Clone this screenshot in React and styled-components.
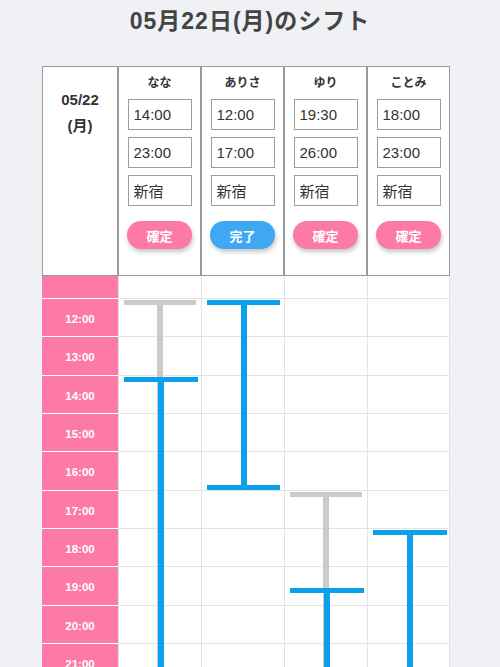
import React from 'react';
import styled, { createGlobalStyle } from 'styled-components';

const HOUR = 115 / 3;
const FIRST_ROW = 23;
const START_HOUR = 12;
const END_HOUR = 27;

const PINK = '#fd7aa8';
const BLUE = '#0ba0e9';
const GRAY = '#cbcbcb';

const staff = [
  { name: 'なな', from: '14:00', to: '23:00', place: '新宿', done: false,
    bars: [{ start: 12, end: 23, color: GRAY, width: 72 }, { start: 14, end: 23, color: BLUE, width: 74 }] },
  { name: 'ありさ', from: '12:00', to: '17:00', place: '新宿', done: true,
    bars: [{ start: 12, end: 17, color: BLUE, width: 73 }] },
  { name: 'ゆり', from: '19:30', to: '26:00', place: '新宿', done: false,
    bars: [{ start: 17, end: 26, color: GRAY, width: 72 }, { start: 19.5, end: 26, color: BLUE, width: 74 }] },
  { name: 'ことみ', from: '18:00', to: '23:00', place: '新宿', done: false,
    bars: [{ start: 18, end: 23, color: BLUE, width: 74 }] },
];

const hours = [];
for (let h = START_HOUR; h < END_HOUR; h++) hours.push(h);

const yOf = (t) => FIRST_ROW - 1 + (t - START_HOUR) * HOUR;

const GlobalStyle = createGlobalStyle`
  html, body {
    margin: 0;
    padding: 0;
  }
  body {
    background: #f0f1f5;
    font-family: "Liberation Sans", "Noto Sans CJK JP", sans-serif;
    color: #333;
  }
`;

const Page = styled.div`
  height: 100vh;
  overflow: hidden;
`;

const Title = styled.h1`
  box-sizing: border-box;
  height: 66px;
  margin: 0;
  padding-top: 5px;
  line-height: 32px;
  text-align: center;
  font-size: 23px;
  font-weight: bold;
  letter-spacing: 1px;
  color: #444;
`;

const Board = styled.div`
  width: 408px;
  margin-left: 42px;
`;

const HeaderRow = styled.div`
  display: grid;
  grid-template-columns: 76px repeat(4, 83px);
  height: 210px;
`;

const HeaderCell = styled.div`
  box-sizing: border-box;
  border: 1px solid #9a9a9a;
  background: #fff;
  display: flex;
  flex-direction: column;
  align-items: center;
`;

const DateCell = styled(HeaderCell)`
  padding-top: 20px;
  font-size: 15px;
  font-weight: bold;
  line-height: 26px;
  color: #333;
`;

const StaffCell = styled(HeaderCell)`
  padding-top: 8px;
`;

const Name = styled.div`
  height: 16px;
  margin-bottom: 8px;
  font-size: 12px;
  font-weight: bold;
  line-height: 16px;
  color: #333;
`;

const Field = styled.input`
  box-sizing: border-box;
  width: 64px;
  height: 31px;
  margin: 0 0 7px;
  padding: 0 5px;
  border: 1px solid #9c9c9c;
  border-radius: 0;
  background: #fff;
  font-family: inherit;
  font-size: 15px;
  color: #333;
  outline: none;
`;

const Action = styled.button`
  width: 65px;
  height: 28px;
  margin-top: 8px;
  border: none;
  border-radius: 14px;
  background: ${(p) => (p.$done ? '#3ea8f3' : PINK)};
  color: #fff;
  font-family: inherit;
  font-size: 13px;
  font-weight: bold;
  box-shadow: 1px 3px 4px rgba(0, 0, 0, 0.22);
`;

const Timeline = styled.div`
  display: grid;
  grid-template-columns: 76px repeat(4, 83px);
`;

const TimeColumn = styled.div`
  background: ${PINK};
`;

const TimeCell = styled.div`
  box-sizing: border-box;
  height: ${(p) => p.$h}px;
  padding-top: 3px;
  border-bottom: 1px solid #fff;
  display: flex;
  align-items: center;
  justify-content: center;
  color: #fff;
  font-size: 11.5px;
  font-weight: bold;
`;

const Lane = styled.div`
  position: relative;
  background: #fff;
  border-left: 1px solid #e3e3e3;
  &:last-child {
    border-right: 1px solid #e3e3e3;
  }
`;

const Slot = styled.div`
  box-sizing: border-box;
  height: ${(p) => p.$h}px;
  border-bottom: 1px solid #e3e3e3;
`;

const Shift = styled.div`
  position: absolute;
  left: 5px;
  width: ${(p) => p.$w}px;
  display: flex;
  flex-direction: column;
`;

const Cap = styled.div`
  height: 5px;
  background: ${(p) => p.$color};
`;

const Stem = styled.div`
  flex: 1;
  width: 6px;
  margin: 0 auto;
  background: ${(p) => p.$color};
`;

const ShiftBar = ({ start, end, color, width }) => {
  const top = yOf(start) + 2;
  const height = yOf(end) - yOf(start) - 1.5;
  return (
    <Shift $w={width} style={{ top, height }}>
      <Cap $color={color} />
      <Stem $color={color} />
      <Cap $color={color} />
    </Shift>
  );
};

const App = () => {
  return (
    <Page>
      <GlobalStyle />
      <Title>05月22日(月)のシフト</Title>
      <Board>
        <HeaderRow>
          <DateCell>
            <span>05/22</span>
            <span>(月)</span>
          </DateCell>
          {staff.map((s) => (
            <StaffCell key={s.name}>
              <Name>{s.name}</Name>
              <Field defaultValue={s.from} />
              <Field defaultValue={s.to} />
              <Field defaultValue={s.place} />
              <Action $done={s.done}>{s.done ? '完了' : '確定'}</Action>
            </StaffCell>
          ))}
        </HeaderRow>
        <Timeline>
          <TimeColumn>
            <TimeCell $h={FIRST_ROW} />
            {hours.map((h) => (
              <TimeCell key={h} $h={HOUR}>{h}:00</TimeCell>
            ))}
          </TimeColumn>
          {staff.map((s) => (
            <Lane key={s.name}>
              <Slot $h={FIRST_ROW} />
              {hours.map((h) => (
                <Slot key={h} $h={HOUR} />
              ))}
              {s.bars.map((b, i) => (
                <ShiftBar key={i} {...b} />
              ))}
            </Lane>
          ))}
        </Timeline>
      </Board>
    </Page>
  );
};

export default App;
